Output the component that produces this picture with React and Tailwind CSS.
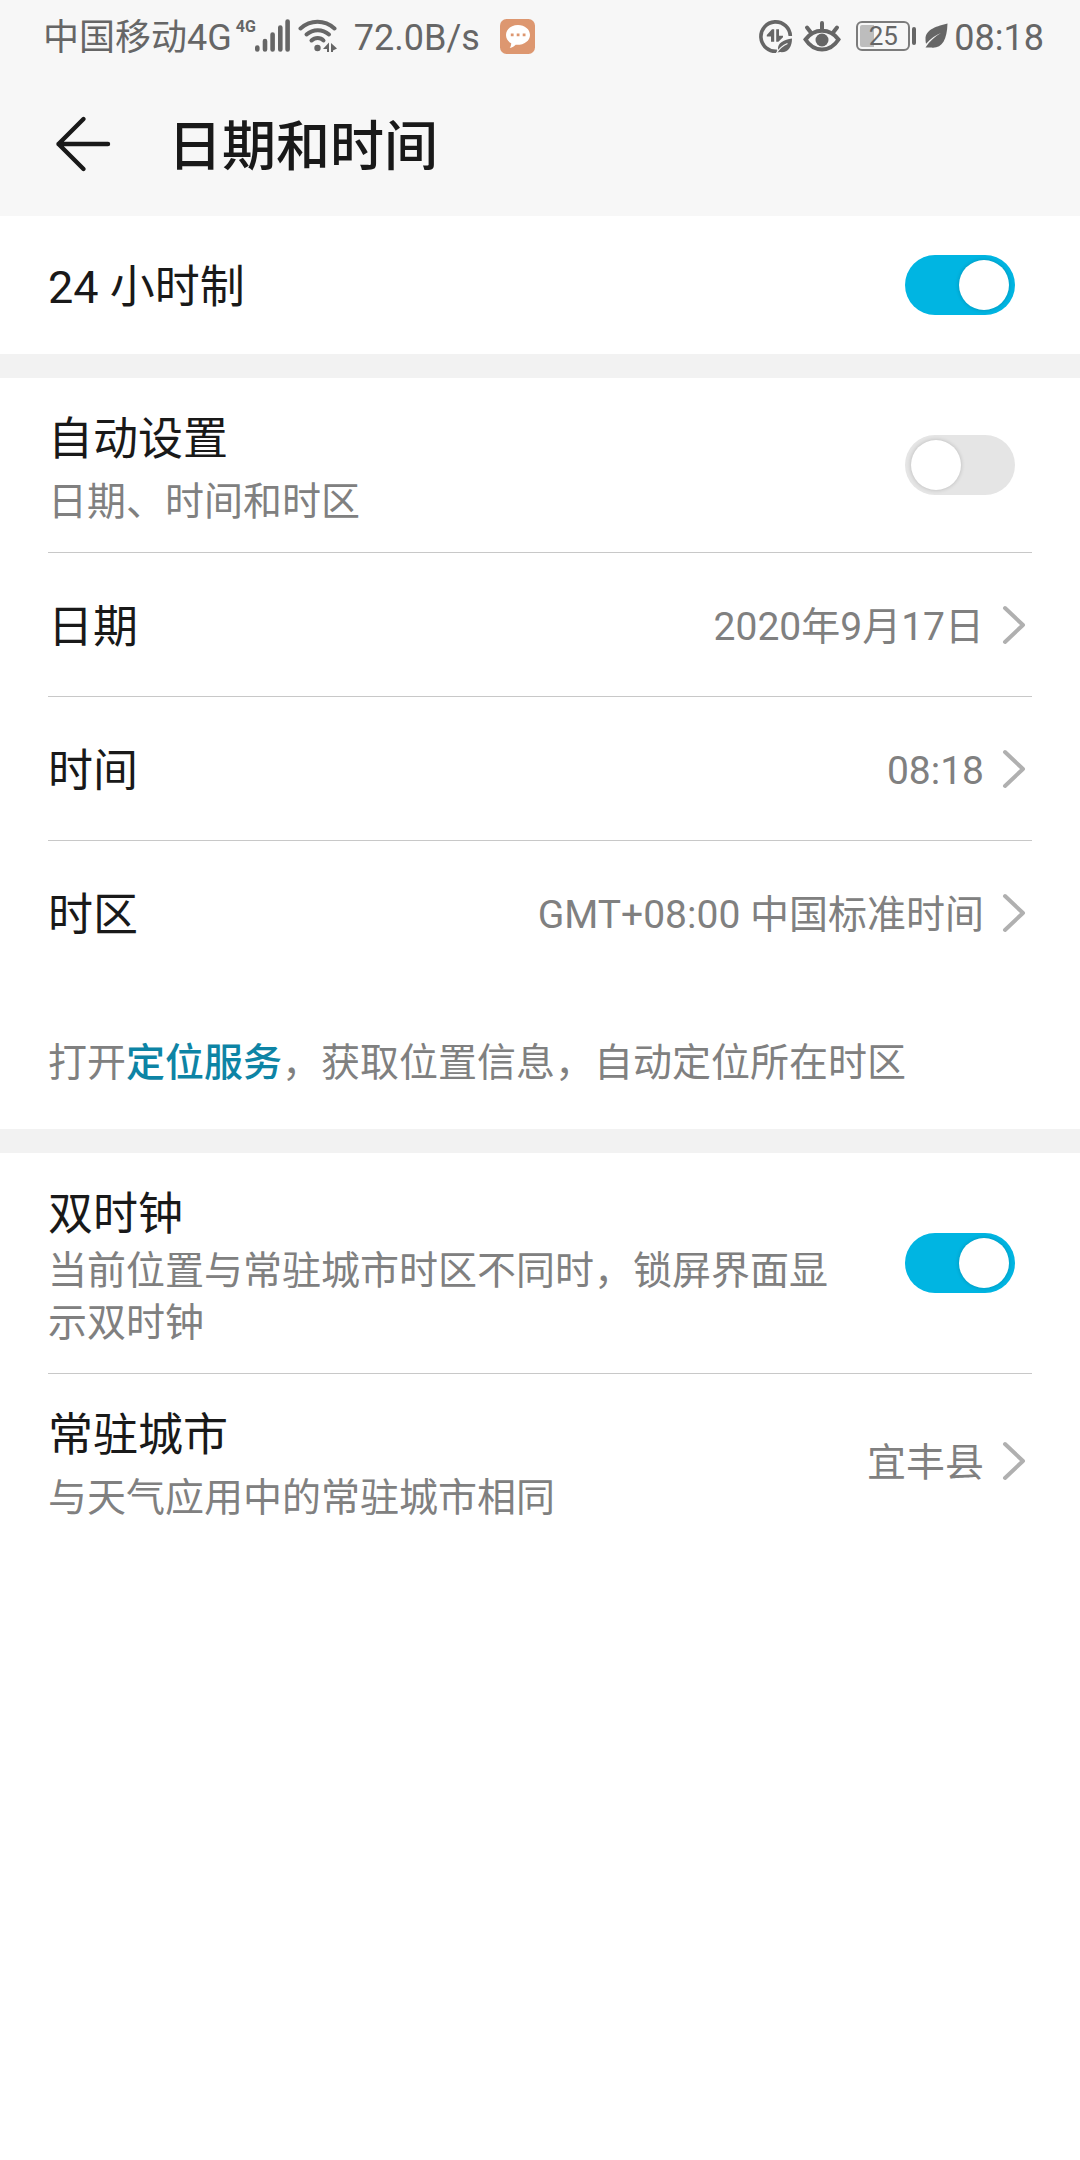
import React, { useState } from 'react';

const StatusBar = () => (
  <div className="flex h-18 items-center justify-between pl-[43px] pr-9 text-[36px] leading-[42px] text-[#666666]">
    <div className="flex items-center">
      <span className="pt-1">中国移动4G</span>
      <span className="mt-1.5 ml-1 self-start text-[16px] leading-4 font-bold">4G</span>
      <SignalIcon />
      <WifiIcon />
      <span className="ml-4 pt-1">72.0B/s</span>
      <MessageIcon />
    </div>
    <div className="flex items-center">
      <DataSaverIcon />
      <EyeIcon />
      <div className="ml-3.5 flex items-center gap-0.5">
        <div className="flex h-[30px] w-[54px] items-center justify-center rounded-md border-2 border-[#7c7c7c] bg-linear-to-r from-[#bdbdbd] from-30% to-transparent to-30% bg-origin-content p-0.5 bg-clip-content text-[26px] leading-6">
          25
        </div>
        <div className="h-[18px] w-1 rounded-sm bg-[#666666]" />
      </div>
      <LeafIcon />
      <span className="ml-1.5 pt-1">08:18</span>
    </div>
  </div>
);

const SignalIcon = () => (
  <svg className="-ml-0.5 h-9 w-9" viewBox="0 0 36 36" stroke="#666" strokeWidth="4.6" strokeLinecap="round">
    <path d="M3.3 31.5v-2M11 31.5v-8.500M18.600 31.500v-15M26.300 31.500v-22M33.600 31.500v-28" />
  </svg>
);

const WifiIcon = () => (
  <svg className="ml-2 h-9 w-10" viewBox="0 0 40 36" fill="none" stroke="#666" strokeWidth="4" strokeLinecap="round">
    <path d="M2.500 10.500C12.500 1.600 26.500 1.600 36.500 10.500" />
    <path d="M8.500 16.500C15 10.700 24.500 10.700 31 16.500" />
    <path d="M13.500 22.500C17 19 22.500 19 25.500 22.500" />
    <circle cx="19.500" cy="30" r="3.200" fill="#666" stroke="none" />
    <path d="M25 31l6-6.500V34h-2v-3zM33 25l6 5.500-4 2V34h-2z" fill="#666" stroke="none" />
  </svg>
);

const MessageIcon = () => (
  <svg className="ml-5 h-9 w-9" viewBox="0 0 36 36">
    <rect x="0" y="1" width="35" height="35" rx="6.500" fill="#dd9770" />
    <path d="M18 7c-6.800 0-12 4.400-12 10 0 3.600 2 6.500 5.200 8.200 0 1.800-.4 3.200-1.500 4.800 2.800-.5 4.600-1.600 6-3.200 7.500.7 14.300-3.600 14.300-9.800 0-5.600-5.200-10-12-10z" fill="#fff" />
    <path d="M10.800 15.500h2.800v2.800h-2.800zM16.700 15.500h2.800v2.800h-2.800zM22.700 15.500h2.800v2.800h-2.800z" fill="#dd9770" />
  </svg>
);

const DataSaverIcon = () => (
  <svg className="h-9 w-9" viewBox="0 0 36 36" fill="none" stroke="#666">
    <path d="M19 33.200A14.700 14.700 0 1 1 32.300 18" strokeWidth="3.600" />
    <path d="M16.200 11.300V23.800h-3.200V18.500H8.800v-1.500l5.200-5.700zM18.200 11.300h2.800v6.500h4v1.500l-4.600 4.500h-2.200z" fill="#666" stroke="none" />
    <path d="M34 20.500c-8 1.500-14.500 4-14 11l-.8 3 3-.4c8 .8 11.800-5 11.800-13.600z" fill="#666" stroke="none" />
    <path d="M18.500 35c3-5 6.500-7.500 11-9.500" stroke="#f7f7f7" strokeWidth="1.200" />
  </svg>
);

const EyeIcon = () => (
  <svg className="ml-2 h-9 w-10" viewBox="0 0 40 36" fill="none" stroke="#666" strokeWidth="4" strokeLinecap="round">
    <path d="M3.500 21.500C12 9.800 28 9.800 36.500 21.500 28 34.800 12 34.800 3.500 21.500z" />
    <circle cx="20" cy="22" r="6.500" fill="#666" stroke="none" />
    <path d="M20 11V5M8.500 14L5 9.500M31.500 14L35 9.500" />
  </svg>
);

const LeafIcon = () => (
  <svg className="ml-2 h-7 w-6" viewBox="0 0 24 28">
    <path d="M23.500 1.500C14 4 1.500 7 1.500 17c0 3 .6 4.800.6 4.800C7 16 12 13 17 11c-6 3.500-11.500 8-15.500 14.500 3 .3 5.500-.2 7 .2C18 26 23 18 23.500 1.500z" fill="#666" />
  </svg>
);

const ChevronIcon = () => (
  <svg className="h-12 w-12 shrink-0" viewBox="0 0 48 48" fill="none" stroke="#b0b0b0" strokeWidth="4" strokeLinecap="round" strokeLinejoin="round">
    <path d="M21 7l18 17-18 17" />
  </svg>
);

const Label = ({ title, summary, tight }) => (
  <span className="block flex-1 pt-8 pb-6">
    <span className="block text-[45px] leading-[60px] text-[#191919]">{title}</span>
    <span className={`${tight ? '' : 'mt-1.5'} block text-[39px] leading-[52px] text-[#808080]`}>
      {summary}
    </span>
  </span>
);

const SwitchRow = ({ title, summary, tight, defaultOn, border }) => {
  const [on, setOn] = useState(defaultOn);

  return (
    <label className={`${border ? 'border-b border-[#c8c8c8]' : ''} mx-12 flex min-h-[138px] items-center pr-[17px]`}>
      {summary ? (
        <Label title={title} summary={summary} tight={tight} />
      ) : (
        <span className="flex-1 pt-1.5 text-[45px] leading-[60px] text-[#191919]">{title}</span>
      )}
      <input
        type="checkbox"
        checked={on}
        onChange={(e) => setOn(e.target.checked)}
        className="ml-15 h-[60px] w-[110px] shrink-0 appearance-none rounded-full bg-[#e5e5e5] px-1.5 py-[5px] before:block before:size-[50px] before:rounded-full before:bg-white before:shadow-[0_0_4px_rgba(0,0,0,0.2)] checked:bg-[#00b5e2] checked:before:translate-x-12"
      />
    </label>
  );
};

const LinkRow = ({ title, summary, value, border }) => (
  <div className="px-12">
    <button className={`${border ? 'border-b border-[#c8c8c8]' : ''} flex min-h-36 w-full items-center text-left`}>
      {summary ? (
        <Label title={title} summary={summary} />
      ) : (
        <span className="flex-1 pt-1.5 text-[45px] leading-[60px] text-[#191919]">{title}</span>
      )}
      <span className="pt-1 text-[39px] leading-[52px] text-[#808080]">{value}</span>
      <ChevronIcon />
    </button>
  </div>
);

const App = () => {
  return (
    <div className="min-h-screen bg-white font-['Roboto','Noto_Sans_CJK_SC',sans-serif]" lang="zh-CN">
      <header className="bg-[#f7f7f7]">
        <StatusBar />
        <div className="flex h-36 items-center pl-12">
          <button aria-label="返回">
            <svg className="size-18" viewBox="0 0 72 72" fill="none" stroke="#191919" strokeWidth="4.400" strokeLinecap="round" strokeLinejoin="round">
              <path d="M35.500 11L10.500 36l25 25M10.500 36H60" />
            </svg>
          </button>
          <h1 className="ml-12 pt-2 text-[54px] leading-[72px] font-medium text-[#191919]">日期和时间</h1>
        </div>
      </header>

      <main className="divide-y-24 divide-[#f2f2f2]">
        <section>
          <SwitchRow title="24 小时制" defaultOn={true} />
        </section>

        <section>
          <SwitchRow title="自动设置" summary="日期、时间和时区" defaultOn={false} border />
          <LinkRow title="日期" value="2020年9月17日" border />
          <LinkRow title="时间" value="08:18" border />
          <LinkRow title="时区" value="GMT+08:00 中国标准时间" />
          <p className="px-12 pt-13 pb-10 text-[39px] leading-[52px] text-[#808080]">
            打开<a href="#location" className="font-medium text-[#0d84a5]">定位服务</a>，获取位置信息，自动定位所在时区
          </p>
        </section>

        <section>
          <SwitchRow
            title="双时钟"
            summary="当前位置与常驻城市时区不同时，锁屏界面显示双时钟"
            defaultOn={true}
            tight
            border
          />
          <LinkRow title="常驻城市" summary="与天气应用中的常驻城市相同" value="宜丰县" />
        </section>
      </main>
    </div>
  );
};

export default App;
